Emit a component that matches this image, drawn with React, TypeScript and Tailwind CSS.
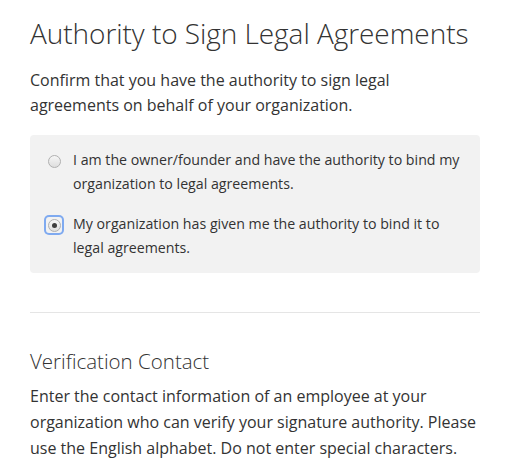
import React, { useState } from 'react';

const options = [
  { id: 'owner', label: 'I am the owner/founder and have the authority to bind my organization to legal agreements.' },
  { id: 'given', label: 'My organization has given me the authority to bind it to legal agreements.' },
];

function Radio({ checked, focused }: { checked: boolean; focused?: boolean }) {
  return (
    <span className={`mt-[5px] flex h-[16px] w-[16px] shrink-0 items-center justify-center rounded-[3px] ${focused ? 'ring-2 ring-[#7faaf0]' : ''}`}>
      <span className="flex h-[13px] w-[13px] items-center justify-center rounded-full border border-[#b0b0b0] bg-gradient-to-b from-[#f6f6f6] to-[#dedede]">
        {checked && <span className="h-[5px] w-[5px] rounded-full bg-[#3d3d3d]" />}
      </span>
    </span>
  );
}

export default function App() {
  const [choice, setChoice] = useState('given');

  return (
    <div className="min-h-screen bg-white px-[30px] pt-[13px] text-[#333] [font-family:'Open_Sans',sans-serif]">
      <div className="w-[450px]">
        <h1 className="whitespace-nowrap text-[28px] font-light leading-[40px] tracking-[-0.05px]">Authority to Sign Legal Agreements</h1>
        <p className="mt-[15px] text-[16px] leading-[25px]">
          Confirm that you have the authority to sign legal agreements on behalf of your organization.
        </p>

        <div className="mt-[17px] flex flex-col gap-[16px] rounded-[4px] bg-[#f2f2f2] px-[16px] pb-[13px] pt-[13px]">
          {options.map(o => (
            <label key={o.id} className="flex cursor-pointer items-start gap-[11px]" onClick={() => setChoice(o.id)}>
              <Radio checked={choice === o.id} focused={o.id === 'given'} />
              <span className="text-[14.2px] leading-[24px]">{o.label}</span>
            </label>
          ))}
        </div>

        <hr className="mt-[39px] border-t border-[#e5e5e5]" />

        <h2 className="mt-[33px] text-[20.5px] font-light leading-[30px]">Verification Contact</h2>
        <p className="mt-[7px] text-[16px] leading-[26px]">
          Enter the contact information of an employee at your organization who can verify your signature authority. Please use the English alphabet. Do not enter special characters.
        </p>
      </div>
    </div>
  );
}
